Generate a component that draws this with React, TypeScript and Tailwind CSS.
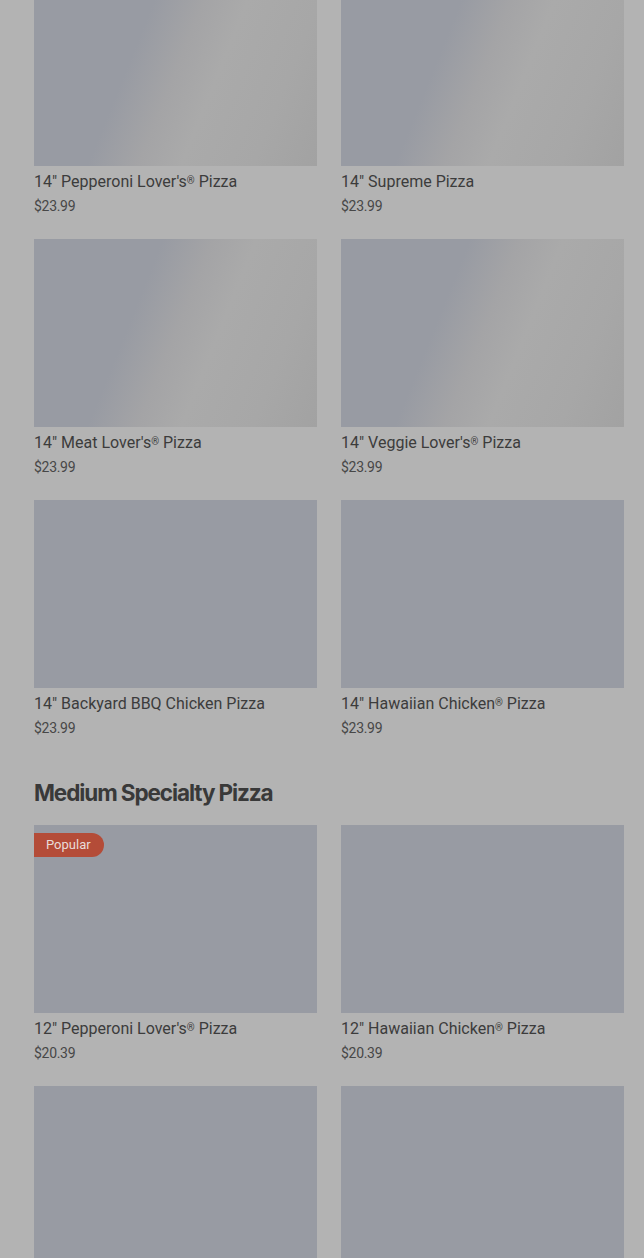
const shimmer =
  "bg-[linear-gradient(112deg,#989ba3_0%,#989ba3_36%,#a4a4a6_50%,#aaaaaa_62%,#a7a7a7_82%,#a2a2a2_100%)]";

type Item = { name: string; price: string; popular?: boolean; shimmer?: boolean };

const large: Item[] = [
  { name: "14\" Pepperoni Lover's® Pizza", price: "$23.99", shimmer: true },
  { name: "14\" Supreme Pizza", price: "$23.99", shimmer: true },
  { name: "14\" Meat Lover's® Pizza", price: "$23.99", shimmer: true },
  { name: "14\" Veggie Lover's® Pizza", price: "$23.99", shimmer: true },
  { name: "14\" Backyard BBQ Chicken Pizza", price: "$23.99" },
  { name: "14\" Hawaiian Chicken® Pizza", price: "$23.99" },
];

const medium: Item[] = [
  { name: "12\" Pepperoni Lover's® Pizza", price: "$20.39", popular: true },
  { name: "12\" Hawaiian Chicken® Pizza", price: "$20.39" },
  { name: "", price: "" },
  { name: "", price: "" },
];

// small superscript for the ® mark
function Name({ text }: { text: string }) {
  const parts = text.split("®");
  return (
    <>
      {parts.map((p, i) => (
        <span key={i}>
          {p}
          {i < parts.length - 1 && <sup className="text-[10px] -top-[0.35em]">®</sup>}
        </span>
      ))}
    </>
  );
}

function Card({ item }: { item: Item }) {
  return (
    <div className="flex flex-col pb-[23px]">
      <div
        className={
          "relative h-[188px] w-full " + (item.shimmer ? shimmer : "bg-[#989ba3]")
        }
      >
        {item.popular && (
          <span className="absolute left-0 top-[8px] h-[24px] w-[70px] rounded-r-full bg-[#b44c38] pl-[12px] text-[13px] leading-[24px] text-[#e9dcd8]">
            Popular
          </span>
        )}
      </div>
      <p className="mt-[4px] text-[16px] leading-[24px] text-[#3c3c3c]">
        <Name text={item.name} />
      </p>
      <p className="mt-[2px] text-[14px] leading-[20px] text-[#474747] tracking-[-0.3px]">
        {item.price}
      </p>
    </div>
  );
}

export default function App() {
  return (
    <div className="h-[1258px] overflow-hidden bg-[#b3b3b3] font-['Roboto',sans-serif]">
      <div className="-mt-[22px] pl-[34px] pr-[20px]">
        <div className="grid grid-cols-2 gap-x-[24px]">
          {large.map((it, i) => (
            <Card key={i} item={it} />
          ))}
        </div>
        <h2 className="mt-[16px] mb-[16px] font-['Inter',sans-serif] text-[22.5px] font-bold leading-[32px] tracking-[-1.1px] text-[#393939]">
          Medium Specialty Pizza
        </h2>
        <div className="grid grid-cols-2 gap-x-[24px]">
          {medium.map((it, i) => (
            <Card key={i} item={it} />
          ))}
        </div>
      </div>
    </div>
  );
}
